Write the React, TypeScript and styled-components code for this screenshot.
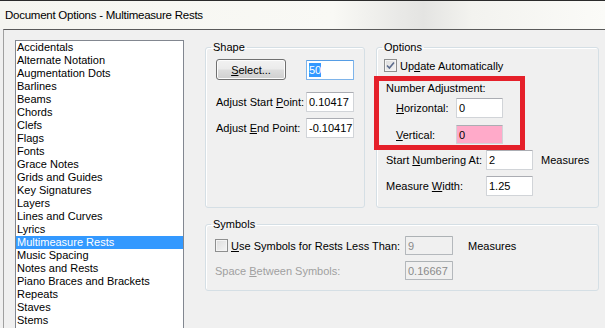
import React from 'react';
import styled, { createGlobalStyle } from 'styled-components';

const Global = createGlobalStyle`
    html, body {
        margin: 0;
        padding: 0;
        overflow: hidden;
        background: #f0f0f0;
    }
`;

const Window = styled.div`
    width: 605px;
    height: 328px;
    overflow: hidden;
    background: #f0f0f0;
    font-family: "Liberation Sans", Arial, sans-serif;
    font-size: 11px;
    color: #000;
`;

const TitleBar = styled.div`
    height: 28px;
    border-top: 1px solid #2b2b2b;
    padding-left: 5px;
    line-height: 29px;
    font-size: 11.5px;
    letter-spacing: -0.25px;
    background: linear-gradient(90deg, #f5f5f0 0%, #f9f9f5 55%, #e9e9e7 66%, #e4e4e2 70%, #f3f3ef 78%, #fbfbf8 100%);
`;

const Client = styled.div`
    margin-left: 3px;
    border-top: 1px solid #5a5a5a;
    border-left: 1px solid #a0a0a0;
    padding: 10px 0 0 11px;
    display: flex;
    gap: 21px;
`;

const List = styled.div`
    width: 169px;
    height: 300px;
    box-sizing: border-box;
    border: 1px solid #828790;
    background: #fff;
    flex-shrink: 0;
`;

const Item = styled.div<{ $selected?: boolean }>`
    height: 13px;
    line-height: 13px;
    padding-left: 1px;
    white-space: nowrap;
    background: ${p => (p.$selected ? '#3399ff' : 'transparent')};
    color: ${p => (p.$selected ? '#fff' : '#000')};
`;

const RightArea = styled.div`
    margin-top: 1px;
    width: 394px;
    display: flex;
    flex-direction: column;
    gap: 10px;
`;

const TopRow = styled.div`
    display: flex;
    gap: 11px;
`;

const GroupBox = styled.fieldset<{ $w: number; $h: number; $pad: number }>`
    margin: 0;
    min-width: 0;
    box-sizing: border-box;
    width: ${p => p.$w}px;
    height: ${p => p.$h}px;
    padding: 5px 0 0 ${p => p.$pad}px;
    border: 1px solid #d5dfe5;
    border-radius: 3px;
    box-shadow: inset 1px 1px 0 #fff;
`;

const Legend = styled.legend<{ $shift: number }>`
    padding: 0 2px;
    margin-left: ${p => p.$shift}px;
    line-height: 13px;
    height: 13px;
`;

const Row = styled.div<{ $top?: number; $indent?: number }>`
    display: flex;
    align-items: center;
    margin-top: ${p => p.$top ?? 0}px;
    padding-left: ${p => p.$indent ?? 0}px;
    white-space: nowrap;
`;

const Label = styled.span<{ $w?: number; $disabled?: boolean }>`
    width: ${p => (p.$w ? `${p.$w}px` : 'auto')};
    flex-shrink: 0;
    color: ${p => (p.$disabled ? '#a0a0a0' : '#000')};
`;

const Key = styled.span`
    text-decoration: underline;
    text-underline-offset: 1px;
`;

const Button = styled.div`
    width: 70px;
    height: 21px;
    box-sizing: border-box;
    border: 1px solid #707070;
    border-radius: 3px;
    background: linear-gradient(#f2f2f2 0%, #ebebeb 48%, #dddddd 52%, #cfcfcf 100%);
    box-shadow: inset 0 0 0 1px #fcfcfc;
    display: flex;
    align-items: center;
    justify-content: center;
`;

const TextBox = styled.div<{ $w: number; $h?: number; $ml?: number; $focus?: boolean; $pink?: boolean; $disabled?: boolean }>`
    width: ${p => p.$w}px;
    height: ${p => p.$h ?? 20}px;
    margin-left: ${p => p.$ml ?? 0}px;
    box-sizing: border-box;
    flex-shrink: 0;
    padding-left: 2px;
    display: flex;
    align-items: center;
    border: 1px solid ${p => (p.$focus ? '#7eb4ea' : p.$disabled ? '#b4b8bc' : '#d1d4d8')};
    border-top-color: ${p => (p.$focus ? '#569de5' : p.$disabled ? '#adb2b5' : '#abadb3')};
    border-radius: 1px;
    background: ${p => (p.$pink ? '#ffaac9' : p.$disabled ? '#f0f0f0' : '#fff')};
    color: ${p => (p.$disabled ? '#8a8a8a' : '#000')};
`;

const Selected = styled.span`
    background: #3399ff;
    color: #fff;
    line-height: 14px;
`;

const Box = styled.div`
    width: 13px;
    height: 13px;
    box-sizing: border-box;
    border: 1px solid #8e8f8f;
    background: linear-gradient(135deg, #dcdcdc 0%, #f5f5f5 100%);
    box-shadow: inset 0 0 0 1px #f4f4f4;
    margin-right: 3px;
    flex-shrink: 0;
    display: flex;
    align-items: center;
    justify-content: center;
`;

const Annotated = styled.div`
    position: relative;
    &::after {
        content: '';
        position: absolute;
        left: -10px;
        top: -6px;
        width: 151px;
        height: 74px;
        box-sizing: border-box;
        border: 5px solid #e5202a;
        pointer-events: none;
    }
`;

const Unit = styled.span<{ $ml: number }>`
    margin-left: ${p => p.$ml}px;
`;

const items = [
    'Accidentals', 'Alternate Notation', 'Augmentation Dots', 'Barlines', 'Beams', 'Chords',
    'Clefs', 'Flags', 'Fonts', 'Grace Notes', 'Grids and Guides', 'Key Signatures', 'Layers',
    'Lines and Curves', 'Lyrics', 'Multimeasure Rests', 'Music Spacing', 'Notes and Rests',
    'Piano Braces and Brackets', 'Repeats', 'Staves', 'Stems',
];

const Check = () => (
    <svg width="9" height="9" viewBox="0 0 9 9">
        <path d="M1 4.5 L3.4 7 L8 1.5" fill="none" stroke="#5b6b8c" strokeWidth="1.6" />
    </svg>
);

export default function App() {
    return (
        <Window>
            <Global />
            <TitleBar>Document Options - Multimeasure Rests</TitleBar>
            <Client>
                <List>
                    {items.map(item => (
                        <Item key={item} $selected={item === 'Multimeasure Rests'}>{item}</Item>
                    ))}
                </List>
                <RightArea>
                    <TopRow>
                        <GroupBox $w={160} $h={167} $pad={10}>
                            <Legend $shift={-5}>Shape</Legend>
                            <Row>
                                <Button><Key>S</Key>elect...</Button>
                                <TextBox $w={48} $ml={20} $focus><Selected>50</Selected></TextBox>
                            </Row>
                            <Row $top={12}>
                                <Label $w={90}>Adjust Start <Key>P</Key>oint:</Label>
                                <TextBox $w={48}>0.10417</TextBox>
                            </Row>
                            <Row $top={6}>
                                <Label $w={90}>Adjust <Key>E</Key>nd Point:</Label>
                                <TextBox $w={48}>-0.10417</TextBox>
                            </Row>
                        </GroupBox>
                        <GroupBox $w={223} $h={167} $pad={7}>
                            <Legend $shift={-2}>Options</Legend>
                            <Row>
                                <Box><Check /></Box>
                                <Label>Up<Key>d</Key>ate Automatically</Label>
                            </Row>
                            <Annotated>
                                <Row $top={10} $indent={2}>
                                    <Label>Number Adjustment:</Label>
                                </Row>
                                <Row $top={4} $indent={12}>
                                    <Label $w={60}><Key>H</Key>orizontal:</Label>
                                    <TextBox $w={47}>0</TextBox>
                                </Row>
                                <Row $top={7} $indent={12}>
                                    <Label $w={60}><Key>V</Key>ertical:</Label>
                                    <TextBox $w={47} $h={19} $pink>0</TextBox>
                                </Row>
                            </Annotated>
                            <Row $top={6} $indent={2}>
                                <Label $w={100}>Start <Key>N</Key>umbering At:</Label>
                                <TextBox $w={47}>2</TextBox>
                                <Unit $ml={8}>Measures</Unit>
                            </Row>
                            <Row $top={6} $indent={2}>
                                <Label $w={100}>Measure <Key>W</Key>idth:</Label>
                                <TextBox $w={47}>1.25</TextBox>
                            </Row>
                        </GroupBox>
                    </TopRow>
                    <GroupBox $w={394} $h={73} $pad={9}>
                        <Legend $shift={-4}>Symbols</Legend>
                        <Row>
                            <Box />
                            <Label $w={174}><Key>U</Key>se Symbols for Rests Less Than:</Label>
                            <TextBox $w={48} $h={19} $disabled>9</TextBox>
                            <Unit $ml={15}>Measures</Unit>
                        </Row>
                        <Row $top={6}>
                            <Label $w={190} $disabled>Space <Key>B</Key>etween Symbols:</Label>
                            <TextBox $w={48} $h={19} $disabled>0.16667</TextBox>
                        </Row>
                    </GroupBox>
                </RightArea>
            </Client>
        </Window>
    );
}
